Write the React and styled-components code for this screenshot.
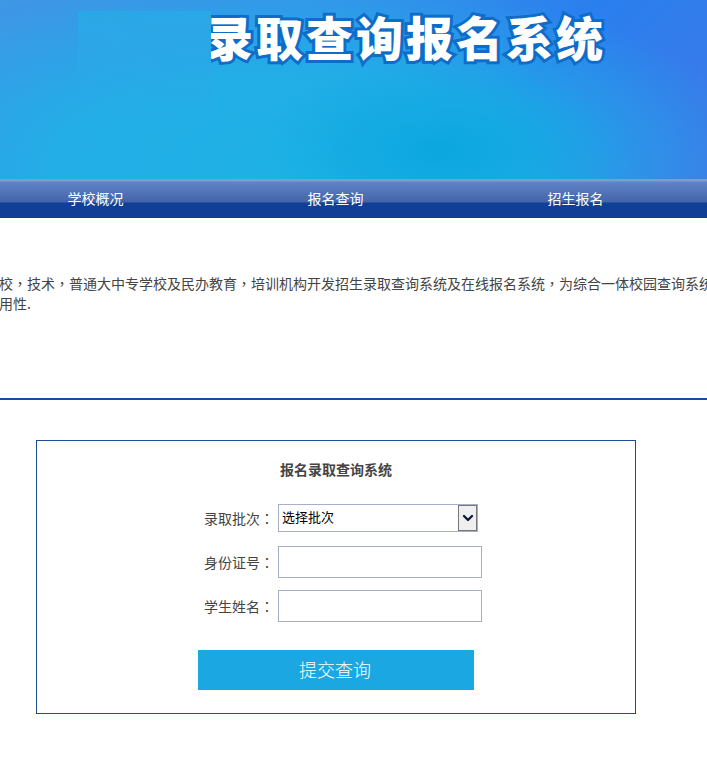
import React from "react";
import styled, { createGlobalStyle } from "styled-components";
import { ChevronDown } from "lucide-react";

const cjk = `"Noto Sans CJK SC", "Liberation Sans", sans-serif`;

const GlobalStyle = createGlobalStyle`
  html, body {
    margin: 0;
    padding: 0;
    background: #fff;
    overflow: hidden;
  }
  body {
    font-family: ${cjk};
    font-size: 14px;
    color: #444;
  }
`;

const Page = styled.div`
  width: 707px;
  height: 763px;
  overflow: hidden;
`;

const Banner = styled.div`
  position: relative;
  height: 179px;
  overflow: hidden;
  background:
    radial-gradient(ellipse 190px 90px at 440px 150px, rgba(8, 166, 222, 0.85) 0%, rgba(8, 166, 222, 0) 100%),
    radial-gradient(ellipse 470px 190px at 290px 165px, #1fb2e6 0%, rgba(31, 178, 230, 0.85) 50%, rgba(31, 178, 230, 0) 100%),
    linear-gradient(135deg, #3f98e6 0%, #3590ea 40%, #2a7fee 68%, #3f78e8 100%);
`;

const BannerPatch = styled.div`
  position: absolute;
  left: 78px;
  top: 11px;
  width: 133px;
  height: 115px;
  background: linear-gradient(180deg, #2aa8e6 0%, rgba(33, 176, 232, 0) 100%);
`;

const TitleClip = styled.div`
  position: absolute;
  left: 211px;
  top: 0;
  right: 0;
  height: 80px;
  overflow: hidden;
`;

const BannerTitle = styled.h1`
  margin: 4px 0 0 -5px;
  font-family: ${cjk};
  font-size: 47px;
  line-height: 64px;
  font-weight: 900;
  letter-spacing: 3px;
  white-space: nowrap;
  color: #fff;
  -webkit-text-stroke: 6px #0f6cc8;
  paint-order: stroke fill;
`;

const Nav = styled.nav`
  display: flex;
  height: 39px;
  margin-left: -24px;
  background: linear-gradient(
    180deg,
    #7f9ccf 0,
    #7f9ccf 2px,
    #5f83c6 3px,
    #4464aa 23px,
    #113f95 24px,
    #103f95 100%
  );
`;

const NavItem = styled.a`
  width: 240px;
  flex: none;
  padding: 8px 1px 0 0;
  box-sizing: border-box;
  text-align: center;
  font-size: 14px;
  line-height: 22px;
  color: #fff;
`;

const Intro = styled.section`
  height: 182px;
  padding-top: 55px;
  box-sizing: border-box;
  border-bottom: 2px solid #1a4a98;
  overflow: hidden;
`;

const IntroLine = styled.div`
  height: 20px;
  white-space: nowrap;
  font-size: 14px;
  line-height: 20px;
  margin-left: ${props => props.$shift}px;
  color: #444;
`;

// the source font centres its full-width punctuation, the TC cut does the same
const Punct = styled.span`
  font-family: "Noto Sans CJK TC", sans-serif;
`;

const FormBox = styled.form`
  width: 600px;
  height: 274px;
  margin: 40px 0 0 36px;
  box-sizing: border-box;
  border: 1px solid #1f4e95;
  display: flex;
  flex-direction: column;
`;

const FormTitle = styled.h2`
  margin: 18px 0 24px;
  font-size: 14px;
  line-height: 21px;
  font-weight: 700;
  text-align: center;
  color: #444;
`;

const Fields = styled.div`
  display: flex;
  flex-direction: column;
`;

const Row = styled.div`
  display: flex;
  align-items: center;
  height: ${props => props.$h}px;
  margin-bottom: ${props => props.$gap}px;
`;

const Label = styled.label`
  width: 237px;
  margin-right: 4px;
  flex: none;
  text-align: right;
  font-size: 14px;
  line-height: 20px;
  white-space: nowrap;
  color: #444;
`;

const SelectWrap = styled.div`
  position: relative;
  width: 200px;
  height: 28px;
`;

const Select = styled.select`
  appearance: none;
  width: 100%;
  height: 100%;
  box-sizing: border-box;
  border: 1px solid #a6aec9;
  border-radius: 0;
  background: #fff;
  padding: 0 0 4px 3px;
  font-family: ${cjk};
  font-size: 13px;
  color: #000;
  outline: none;
`;

const SelectArrow = styled.span`
  position: absolute;
  top: 1px;
  right: 1px;
  width: 19px;
  height: 26px;
  box-sizing: border-box;
  display: flex;
  align-items: center;
  justify-content: center;
  background: #efefef;
  border: 1px solid #777;
  color: #0b1a3a;
  pointer-events: none;
`;

const TextInput = styled.input`
  width: 204px;
  height: 32px;
  box-sizing: border-box;
  border: 1px solid #a6aec9;
  background: #fff;
  padding: 0 4px;
  outline: none;
`;

const Submit = styled.button`
  width: 276px;
  height: 40px;
  margin: 28px 0 0 161px;
  padding: 0 2px 2px 0;
  border: none;
  background: #1ba8e2;
  color: #fff;
  font-family: ${cjk};
  font-size: 18px;
  font-weight: 300;
`;

export default function App() {
    return (
        <Page>
            <GlobalStyle />
            <Banner>
                <BannerPatch />
                <TitleClip>
                    <BannerTitle>录取查询报名系统</BannerTitle>
                </TitleClip>
            </Banner>
            <Nav>
                <NavItem>学校概况</NavItem>
                <NavItem>报名查询</NavItem>
                <NavItem>招生报名</NavItem>
            </Nav>
            <Intro>
                <IntroLine $shift={-1}>
                    校<Punct>，</Punct>技术<Punct>，</Punct>普通大中专学校及民办教育<Punct>，</Punct>培训机构开发招生录取查询系统及在线报名系统<Punct>，</Punct>为综合一体校园查询系统
                </IntroLine>
                <IntroLine $shift={-1}>用性.</IntroLine>
            </Intro>
            <FormBox onSubmit={e => e.preventDefault()}>
                <FormTitle>报名录取查询系统</FormTitle>
                <Fields>
                    <Row $h={28} $gap={14}>
                        <Label>录取批次<Punct>：</Punct></Label>
                        <SelectWrap>
                            <Select defaultValue="">
                                <option value="">选择批次</option>
                            </Select>
                            <SelectArrow>
                                <ChevronDown size={16} strokeWidth={3.5} />
                            </SelectArrow>
                        </SelectWrap>
                    </Row>
                    <Row $h={32} $gap={12}>
                        <Label>身份证号<Punct>：</Punct></Label>
                        <TextInput />
                    </Row>
                    <Row $h={32} $gap={0}>
                        <Label>学生姓名<Punct>：</Punct></Label>
                        <TextInput />
                    </Row>
                </Fields>
                <Submit type="submit">提交查询</Submit>
            </FormBox>
        </Page>
    );
}
